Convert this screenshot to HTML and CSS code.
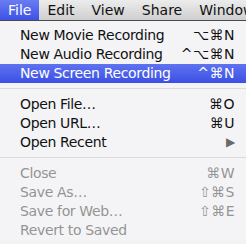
FILE: index.html
```html
<!DOCTYPE html>
<html lang="en">
<head>
    <meta charset="UTF-8">
    <title>File menu</title>
    <link rel="stylesheet" href="styles.css">
</head>
<body>
    <div class="menubar">
        <span class="bar-item active">File</span>
        <span class="bar-item">Edit</span>
        <span class="bar-item">View</span>
        <span class="bar-item">Share</span>
        <span class="bar-item">Window</span>
    </div>

    <div class="menu">
        <div class="row"><span>New Movie Recording</span><span class="key">⌥⌘N</span></div>
        <div class="row"><span>New Audio Recording</span><span class="key">^⌥⌘N</span></div>
        <div class="row selected"><span>New Screen Recording</span><span class="key">^⌘N</span></div>
        <div class="sep"></div>
        <div class="row"><span>Open File…</span><span class="key">⌘O</span></div>
        <div class="row"><span>Open URL…</span><span class="key">⌘U</span></div>
        <div class="row"><span>Open Recent</span><span class="arrow">▶</span></div>
        <div class="sep"></div>
        <div class="row disabled"><span>Close</span><span class="key">⌘W</span></div>
        <div class="row disabled"><span>Save As…</span><span class="key">⇧⌘S</span></div>
        <div class="row disabled"><span>Save for Web…</span><span class="key">⇧⌘E</span></div>
        <div class="row disabled"><span>Revert to Saved</span><span class="key"></span></div>
    </div>
</body>
</html>
```

FILE: styles.css
```css
body { margin: 0; font-family: "DejaVu Sans", "Noto Sans", sans-serif; font-size: 14px; background: #f3f3f5; width: 246px; height: 244px; overflow: hidden; }

.menubar { display: flex; height: 20px; border-bottom: 1px solid #4a4a4a; background: linear-gradient(#ececec, #cfcfcf); overflow: hidden; }
.bar-item { padding: 0 9px 0 8px; line-height: 20px; color: #111; white-space: nowrap; }
.bar-item.active { background: linear-gradient(#6a7cf2, #3c52e6); color: #fff; padding-right: 8px; }

.menu { padding-top: 5px; background: #f4f4f6; }
.row { display: flex; justify-content: space-between; align-items: center; height: 19px; line-height: 19px; padding: 0 11px 0 20px; color: #111; white-space: nowrap; letter-spacing: -0.35px; }
.row.selected { background: linear-gradient(#5f72f0, #3b50e4); color: #fff; }
.row.disabled { color: #949494; }
.key { letter-spacing: 0.5px; }
.arrow { font-size: 12px; color: #6a6a6a; }

.sep { height: 1px; background: #dadada; margin: 5px 0 6px; }
```
